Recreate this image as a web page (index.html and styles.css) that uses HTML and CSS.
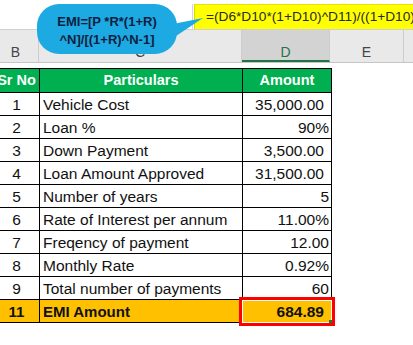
FILE: index.html
```html
<!DOCTYPE html>
<html lang="en">
<head>
<meta charset="utf-8">
<title>EMI Calculation</title>
<link rel="stylesheet" href="styles.css">
</head>
<body>
<div class="sheet">
  <div class="formula-bar">
    <div class="name-area"></div>
    <div class="formula">=(D6*D10*(1+D10)^D11)/((1+D10)^D11-1)</div>
  </div>
  <div class="col-headers">
    <div class="ch ch-b">B</div>
    <div class="ch ch-c">C</div>
    <div class="ch ch-d">D</div>
    <div class="ch ch-e">E</div>
    <div class="ch ch-f"></div>
  </div>
  <div class="gap"></div>
  <table class="emi">
    <colgroup>
      <col class="c-sr">
      <col class="c-part">
      <col class="c-amt">
    </colgroup>
    <thead>
      <tr><th>Sr No</th><th>Particulars</th><th>Amount</th></tr>
    </thead>
    <tbody>
      <tr><td class="sr">1</td><td class="part">Vehicle Cost</td><td class="amt acc">35,000.00</td></tr>
      <tr><td class="sr">2</td><td class="part">Loan %</td><td class="amt">90%</td></tr>
      <tr><td class="sr">3</td><td class="part">Down Payment</td><td class="amt acc">3,500.00</td></tr>
      <tr><td class="sr">4</td><td class="part">Loan Amount Approved</td><td class="amt acc">31,500.00</td></tr>
      <tr><td class="sr">5</td><td class="part">Number of years</td><td class="amt">5</td></tr>
      <tr><td class="sr">6</td><td class="part">Rate of Interest per annum</td><td class="amt">11.00%</td></tr>
      <tr><td class="sr">7</td><td class="part">Freqency of payment</td><td class="amt">12.00</td></tr>
      <tr><td class="sr">8</td><td class="part">Monthly Rate</td><td class="amt">0.92%</td></tr>
      <tr><td class="sr">9</td><td class="part">Total number of payments</td><td class="amt">60</td></tr>
      <tr class="total"><td class="sr">11</td><td class="part">EMI Amount</td><td class="amt acc selected">684.89<span class="handle"></span></td></tr>
    </tbody>
  </table>
  <div class="callout">
    <svg class="tail" width="40" height="30" viewBox="0 0 40 30" aria-hidden="true">
      <polygon points="0,8 30,2 0,22" fill="#1DA9E2"/>
    </svg>
    <div class="callout-text">EMI=[P *R*(1+R)<br>^N]/[(1+R)^N-1]</div>
  </div>
</div>
</body>
</html>
```

FILE: styles.css
```css
html, body {
  margin: 0;
  padding: 0;
  background: #ffffff;
}

body {
  width: 413px;
  height: 345px;
  overflow: hidden;
  font-family: "Liberation Sans", Arial, sans-serif;
}

.sheet {
  position: relative;
  width: 413px;
  height: 345px;
  overflow: hidden;
}

/* formula bar */
.formula-bar {
  display: flex;
  height: 29px;
  border-bottom: 1px solid #d0d0d0;
  box-sizing: content-box;
}

.name-area {
  width: 192px;
  margin-top: 4px;
  border-right: 1px solid #d4d4d4;
  flex: none;
}

.formula {
  flex: none;
  width: 240px;
  margin-top: 4px;
  margin-left: 1px;
  background: #ffff00;
  border-left: 1px solid #d8d800;
  border-top: 1px solid #e6e600;
  padding-left: 11px;
  font-size: 13.7px;
  line-height: 24px;
  color: #2a2a2a;
  white-space: nowrap;
  overflow: hidden;
}

/* column headers */
.col-headers {
  display: flex;
  height: 32px;
  background: #e9e9e9;
  border-bottom: 1px solid #c6c6c6;
  margin-left: -7px;
}

.ch {
  flex: none;
  box-sizing: border-box;
  border-right: 1px solid #cdcdcd;
  display: flex;
  align-items: flex-end;
  justify-content: center;
  padding-bottom: 2px;
  font-size: 14px;
  line-height: 16px;
  color: #444444;
}

.ch-b { width: 46px; }
.ch-c { width: 203px; }
.ch-d {
  width: 88px;
  background: #d3d3d3;
  color: #217346;
  border-bottom: 2px solid #217346;
  padding-bottom: 0;
}
.ch-e { width: 74px; }
.ch-f { width: 40px; border-right: none; }

.gap {
  height: 5px;
}

/* data table */
.emi {
  border-collapse: collapse;
  table-layout: fixed;
  width: 338px;
  margin-left: -7px;
}

.c-sr { width: 46px; }
.c-part { width: 203px; }
.c-amt { width: 89px; }

.emi th,
.emi td {
  border: 1px solid #000000;
  padding: 0;
  white-space: nowrap;
  overflow: hidden;
}

.emi th {
  height: 23px;
  background: #00b050;
  color: #ffffff;
  font-weight: bold;
  font-size: 14.5px;
  line-height: 23px;
  text-align: center;
}

.emi td {
  height: 21px;
  font-size: 15.5px;
  line-height: 21px;
  color: #111111;
  padding-top: 1px;
}

.emi td.sr {
  text-align: center;
}

.emi td.part {
  padding-left: 3px;
}

.emi td.amt {
  text-align: right;
  padding-right: 2px;
}

.emi td.amt.acc {
  padding-right: 7px;
}

.total td {
  background: #ffc000;
  font-weight: bold;
  font-size: 15px;
}

.total td.amt {
  font-size: 15.5px;
}

.emi td.selected {
  position: relative;
  overflow: visible;
}

.emi td.selected::after {
  content: "";
  position: absolute;
  left: -4px;
  right: -4px;
  top: -3px;
  bottom: -4px;
  border: 3px solid #ff0000;
  box-shadow: inset 0 0 0 1px #ffffff;
}

.handle {
  position: absolute;
  right: -1px;
  bottom: -1px;
  width: 3px;
  height: 3px;
  background: #217346;
  z-index: 2;
}

/* callout bubble */
.callout {
  position: absolute;
  left: 37px;
  top: 4px;
  width: 140px;
  height: 50px;
  background: #1da9e2;
  border-radius: 22px;
  z-index: 5;
}

.tail {
  position: absolute;
  left: 136px;
  top: 12px;
  display: block;
}

.callout-text {
  position: relative;
  padding-top: 9px;
  text-align: center;
  font-weight: bold;
  font-size: 13px;
  line-height: 18px;
  color: #0f1e3e;
  white-space: nowrap;
}
```
